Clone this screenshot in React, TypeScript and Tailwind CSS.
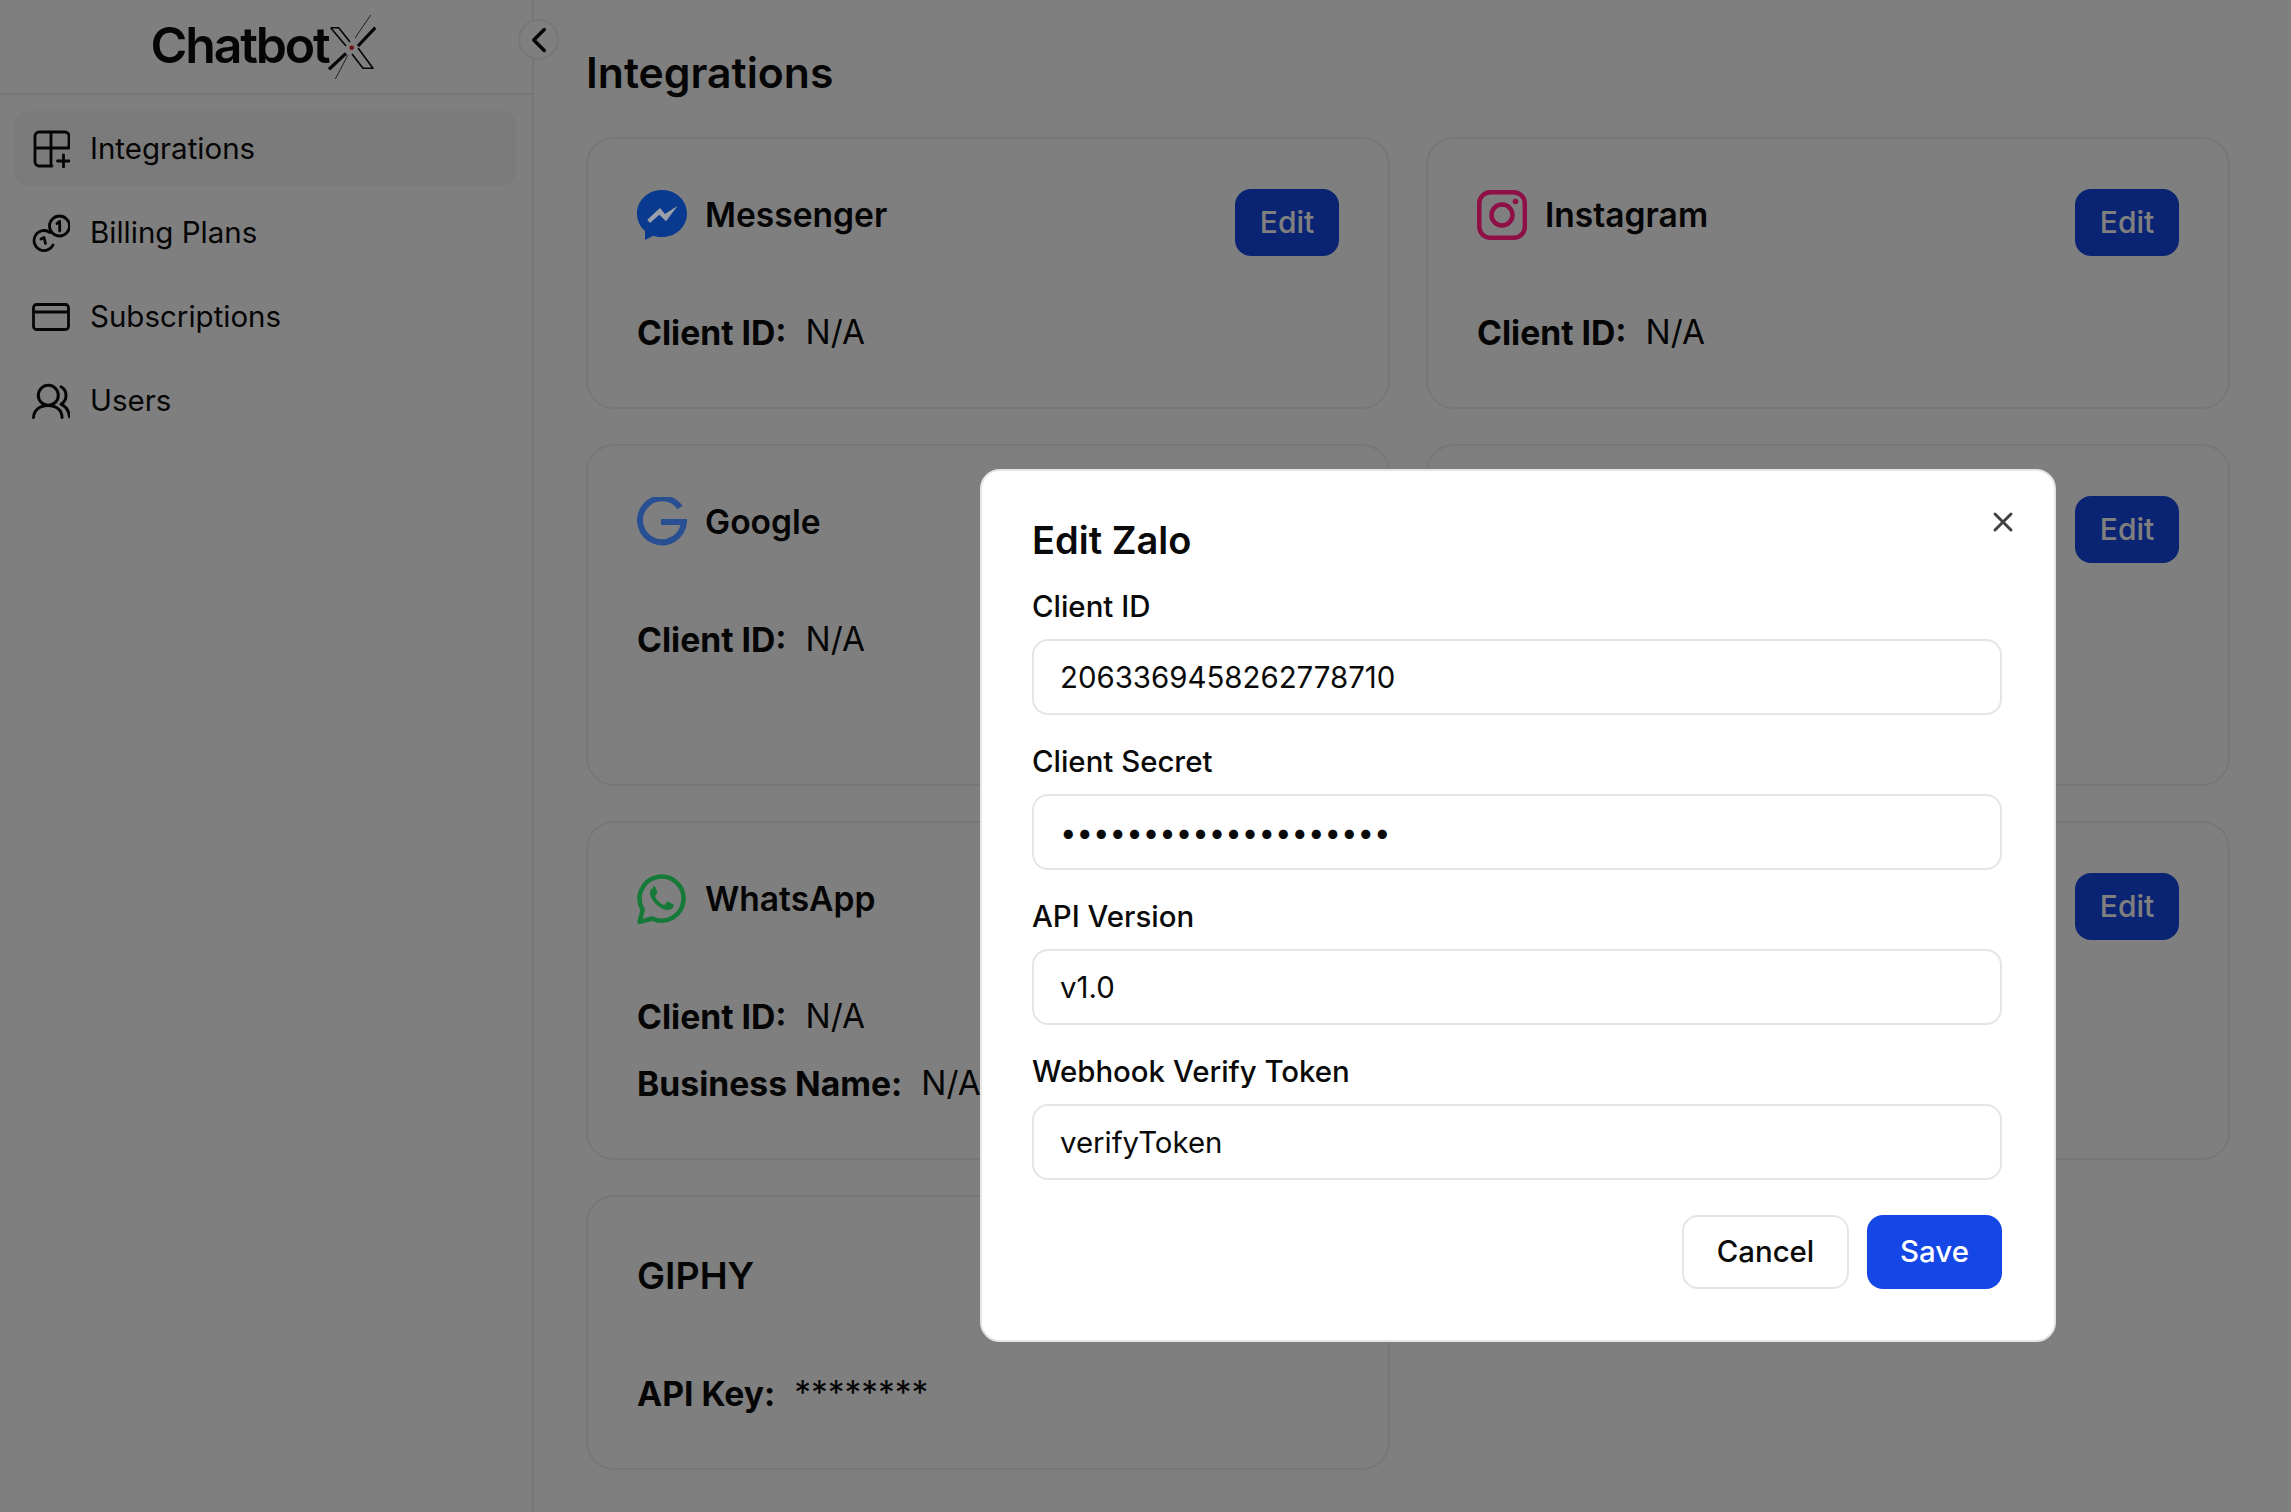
import { ChevronLeft, X } from "lucide-react";
import type { ReactNode } from "react";

const font = "font-['Inter',sans-serif]";

function IntegrationsIcon() {
  return (
    <svg viewBox="0 0 38 38" className="h-[38px] w-[38px]" fill="none" stroke="#0b0b10" strokeWidth="2.800" strokeLinecap="round" strokeLinejoin="round">
      <path d="M20 36H7a4 4 0 0 1-4-4V6a4 4 0 0 1 4-4h26a4 4 0 0 1 4 4v12H3M19 2v34" />
      <path d="M31.500 25v12M25.500 31h12" />
    </svg>
  );
}

function BillingIcon() {
  return (
    <svg viewBox="0 0 38 38" className="h-[38px] w-[38px]" fill="none" stroke="#0b0b10" strokeWidth="2.800" strokeLinecap="round" strokeLinejoin="round">
      <circle cx="27.500" cy="12" r="10" />
      <path d="M25 9.500l2.700-2.200V17" />
      <path d="M18 18.500A10 10 0 1 0 21 31" />
      <path d="M9 25l3-1.500 1.500 6" />
    </svg>
  );
}

function CardIcon() {
  return (
    <svg viewBox="0 0 38 28" className="h-[28px] w-[38px]" fill="none" stroke="#0b0b10" strokeWidth="2.800" strokeLinejoin="round">
      <rect x="1.500" y="1.500" width="35" height="25" rx="3" />
      <path d="M2 9h34" />
    </svg>
  );
}

function UsersIcon() {
  return (
    <svg viewBox="0 0 38 38" className="h-[38px] w-[38px]" fill="none" stroke="#0b0b10" strokeWidth="3" strokeLinecap="round" strokeLinejoin="round">
      <circle cx="16.300" cy="13.300" r="10" />
      <path d="M1.500 35.500C2 28 8 23.500 16 23.500s14 4.500 14 12" />
      <path d="M29 4.700c3.500 2 5 5.500 5 8.500s-1.500 7-5 9c5 2.500 8 7 8.500 12.500" />
    </svg>
  );
}

function MessengerIcon() {
  return (
    <svg viewBox="0 0 50 50" className="h-[50px] w-[50px]">
      <path d="M25 0C11 0 0 10.500 0 23.500c0 7 3 13.200 8 17.500v9l8-4.300c2.800.8 5.800 1.300 9 1.300 14 0 25-10.500 25-23.500S39 0 25 0z" fill="#0a3a8f" />
      <path d="M10.300 29.700L23 18l5 6 12.700-8.300L29 31.300l-6.700-6.600L13 33z" fill="#9aa0aa" />
    </svg>
  );
}

function InstagramIcon() {
  return (
    <svg viewBox="0 0 50 50" className="h-[50px] w-[50px]" fill="none" stroke="#8f0f47" strokeWidth="4.500">
      <rect x="2.300" y="2.300" width="45.500" height="45.500" rx="11" />
      <circle cx="25" cy="25" r="10.500" />
      <circle cx="38.500" cy="11.500" r="2.800" fill="#8f0f47" stroke="none" />
    </svg>
  );
}

function GoogleIcon() {
  return (
    <svg viewBox="0 0 50 50" className="h-[50px] w-[50px]" fill="none" stroke="#274f92" strokeWidth="6">
      <path d="M43 10.500A22 22 0 1 0 47 25H24" />
    </svg>
  );
}

function WhatsappIcon() {
  return (
    <svg viewBox="0 0 50 50" className="h-[50px] w-[50px]">
      <path d="M2.500 48l3.200-12A22 22 0 1 1 15 44.500z" fill="none" stroke="#157a38" strokeWidth="4.500" strokeLinejoin="round" />
      <path d="M16 14c-2 1-3.500 3-3 6 1.500 7 8.500 14.500 16.500 16 3 .5 6-1 7-3.500.4-1 .3-2-.2-2.300l-5-2.500c-.8-.4-1.300 0-1.800.7l-1.500 2c-.5.6-1 .6-1.700.3-3.500-1.500-6-4-8-7.800-.3-.7-.2-1.200.3-1.700l1.400-1.700c.4-.5.5-1 .2-1.700l-2-4.800c-.4-1-1-1.200-2.200-.4z" fill="#157a38" />
    </svg>
  );
}

function EditButton() {
  return (
    <button type="button" className="flex h-[67px] w-[104px] items-center justify-center rounded-[16px] bg-[#1447e6] text-[30px] font-medium text-white">
      Edit
    </button>
  );
}

function Card({
  icon,
  title,
  rows,
  edit = true,
  className = "",
}: {
  icon?: ReactNode;
  title: string;
  rows: [string, string][];
  edit?: boolean;
  className?: string;
}) {
  return (
    <div className={`rounded-[28px] border-2 border-[#eeeeee] bg-white px-[49px] pb-[52px] pt-[50px] ${className}`}>
      <div className="flex items-start justify-between">
        <div className="flex items-center gap-[18px]">
          {icon && <span className="relative z-10">{icon}</span>}
          {edit ? (
            <span className="pt-[1px] text-[33.600px] font-semibold leading-[50px] text-[#0a0a0a]">{title}</span>
          ) : (
            <span className="text-[37.500px] font-semibold leading-[58px] text-[#0a0a0a]">{title}</span>
          )}
        </div>
        {edit && <EditButton />}
      </div>
      <div className={`flex flex-col gap-[22px] ${edit ? "mt-[54px]" : "mt-[66px]"}`}>
        {rows.map(([k, v]) => (
          <div key={k} className="flex items-center gap-[19px] text-[33.400px] leading-[45px] text-[#0a0a0a]">
            <span className="text-[33.700px] font-bold">{k}</span>
            <span>{v}</span>
          </div>
        ))}
      </div>
    </div>
  );
}

function Field({ label, value, type = "text" }: { label: string; value: string; type?: string }) {
  return (
    <div className="flex flex-col">
      <label className="text-[29.400px] font-medium leading-[44px] text-[#0a0a0a]">{label}</label>
      <input
        type={type}
        readOnly
        value={value}
        className="mt-[10px] h-[76px] w-full rounded-[16px] border-2 border-[#e5e5e5] bg-white px-[26px] text-[29.400px] text-[#0a0a0a] outline-none"
      />
    </div>
  );
}

const nav = [
  { label: "Integrations", icon: <IntegrationsIcon />, active: true },
  { label: "Billing Plans", icon: <BillingIcon /> },
  { label: "Subscriptions", icon: <CardIcon /> },
  { label: "Users", icon: <UsersIcon /> },
];

export default function App() {
  return (
    <div className={`relative flex h-screen overflow-hidden bg-white ${font}`}>
      <aside className="flex w-[534px] shrink-0 flex-col border-r-2 border-[#eeeeee] bg-white">
        <div className="flex h-[95px] items-center justify-center border-b-2 border-[#eeeeee] pr-[3px]">
          <span className="mb-[3px] text-[50px] font-semibold leading-none tracking-[-2.200px] text-[#0a0a0a]">Chatbot</span>
          <svg viewBox="0 0 50 70" className="mt-[-2px] h-[70px] w-[50px]" fill="none" stroke="#0a0a0a">
            <path d="M2.700 16.700H10.700L22 31M2.700 16.700L18 35M30 37L45 57.300H35L24 43" strokeWidth="1.600" strokeLinejoin="round" />
            <path d="M47.300 16.700L30 35M18 42.300L1 58.300" strokeWidth="3.200" />
            <path d="M42.700 4L27 27M20 44L7.300 68" stroke="#444444" strokeWidth="1" />
            <circle cx="23.700" cy="36.700" r="2.300" fill="#e11d2a" stroke="none" />
          </svg>
        </div>
        <nav className="flex flex-col gap-[9px] pl-[14px] pr-[16px] pt-[16px]">
          {nav.map((item) => (
            <div
              key={item.label}
              className={`flex h-[75px] items-center gap-[20px] rounded-[14px] px-[18px] text-[29.500px] text-[#0a0a0a] ${item.active ? "bg-[#f7f7f7]" : ""}`}
            >
              <span className="flex w-[38px] items-center justify-center">{item.icon}</span>
              {item.label}
            </div>
          ))}
        </nav>
      </aside>

      <main className="min-w-0 flex-1 pl-[52px] pr-[61px]">
        <h1 className="pt-[44px] text-[42.700px] font-semibold leading-[58px] text-[#0a0a0a]">Integrations</h1>
        <div className="mt-[35px] grid grid-cols-2 gap-x-[36px] gap-y-[35px]">
          <Card icon={<MessengerIcon />} title="Messenger" rows={[["Client ID:", "N/A"]]} />
          <Card icon={<InstagramIcon />} title="Instagram" rows={[["Client ID:", "N/A"]]} />
          <Card icon={<GoogleIcon />} title="Google" rows={[["Client ID:", "N/A"]]} className="min-h-[342px]" />
          <Card title="" rows={[]} />
          <Card icon={<WhatsappIcon />} title="WhatsApp" rows={[["Client ID:", "N/A"], ["Business Name:", "N/A"]]} />
          <Card title="" rows={[]} />
          <Card title="GIPHY" rows={[["API Key:", "********"]]} edit={false} />
        </div>
      </main>

      <button type="button" className="absolute left-[518px] top-[19px] flex h-[41px] w-[41px] items-center justify-center rounded-full border-2 border-[#eeeeee] bg-white text-[#0a0a0a]">
        <ChevronLeft size={42} strokeWidth={2} className="shrink-0" />
      </button>

      <div className="absolute inset-0 bg-black/50" />

      <div className="absolute left-[980px] top-[469px] z-20 w-[1076px] rounded-[20px] border-2 border-[#e5e5e5] bg-white pb-[51px] pl-[50px] pr-[52px] pt-[44px]">
        <button type="button" className="absolute right-[35px] top-[35px] text-[#404040]">
          <X size={32} strokeWidth={2.200} />
        </button>
        <h2 className="text-[38px] font-semibold leading-[50px] text-[#0a0a0a]">Edit Zalo</h2>
        <div className="mt-[20px] flex flex-col gap-[25px]">
          <Field label="Client ID" value="2063369458262778710" />
          <Field label="Client Secret" value="abcdefghijklmnopqrst" type="password" />
          <Field label="API Version" value="v1.0" />
          <Field label="Webhook Verify Token" value="verifyToken" />
        </div>
        <div className="mt-[35px] flex justify-end gap-[18px]">
          <button type="button" className="h-[74px] w-[167px] rounded-[16px] border-2 border-[#e5e5e5] bg-white text-[29.400px] font-medium text-[#0a0a0a]">
            Cancel
          </button>
          <button type="button" className="h-[74px] w-[135px] rounded-[16px] bg-[#1447e6] text-[29.400px] font-medium text-white">
            Save
          </button>
        </div>
      </div>
    </div>
  );
}
